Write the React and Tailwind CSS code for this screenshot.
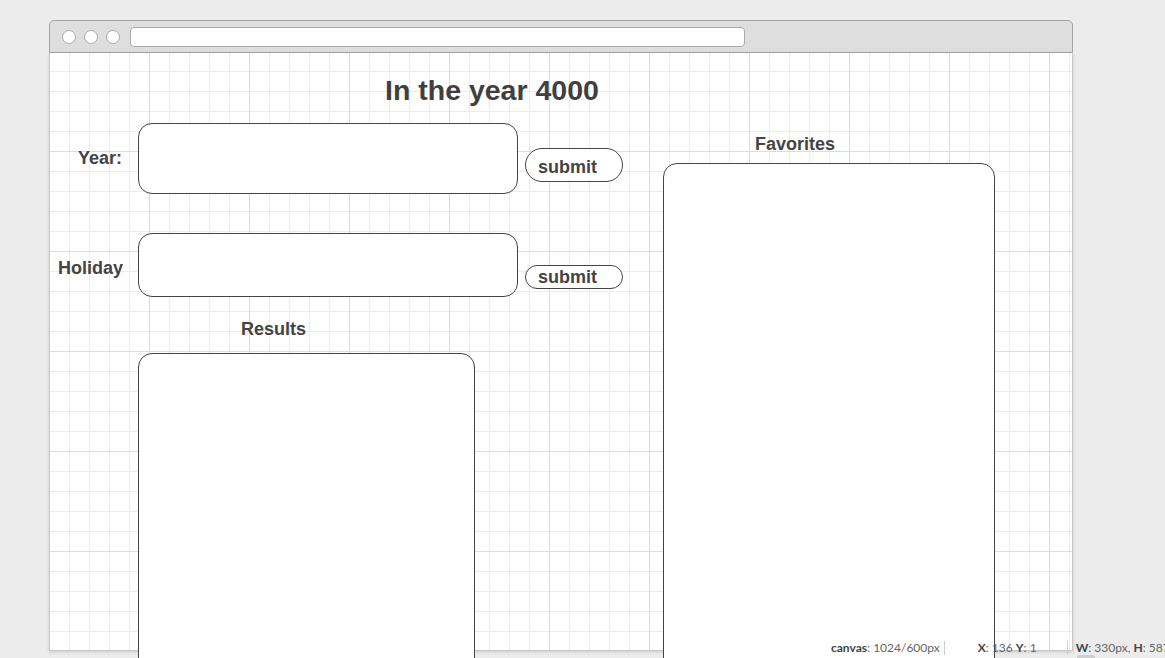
import React from 'react'

const font = { fontFamily: '"Liberation Sans", Arial, sans-serif' }

const Field = ({ className }) => (
  <div className={`border border-[#444] bg-white rounded-[14px] ${className}`}></div>
)

const SubmitButton = ({ className }) => (
  <div className={`w-[98px] border border-[#444] bg-white rounded-[17px] pl-[12px] flex items-center text-[18px] font-bold text-[#444] leading-none ${className}`}>
    submit
  </div>
)

export default function App() {
  return (
    <div className="relative h-[658px] w-[1165px] overflow-hidden bg-[#ececec]" style={font}>
      {/* mock browser window */}
      <div className="ml-[49px] pt-[20px] w-[1024px]">
        <div className="h-[33px] bg-[#dedede] border border-[#a3a3a3] rounded-t-[5px] flex items-center pl-[12px] gap-[8px]">
          <span className="w-[14px] h-[14px] rounded-full bg-white border border-[#aaa]"></span>
          <span className="w-[14px] h-[14px] rounded-full bg-white border border-[#aaa]"></span>
          <span className="w-[14px] h-[14px] rounded-full bg-white border border-[#aaa]"></span>
          <div className="ml-[2px] w-[615px] h-[20px] bg-white border border-[#aaa] rounded-[4px]"></div>
        </div>

        {/* canvas */}
        <div className="h-[598px] border-x border-b border-[#c8c8c8] shadow-[0_1px_3px_rgba(0,0,0,0.15)] bg-white bg-[linear-gradient(to_right,#dcdcdc_1px,transparent_1px),linear-gradient(to_bottom,#dcdcdc_1px,transparent_1px),linear-gradient(to_right,#ececec_1px,transparent_1px),linear-gradient(to_bottom,#ececec_1px,transparent_1px)] bg-[size:100px_100px,100px_100px,20px_20px,20px_20px] bg-[position:-1px_-2px]">
          <h1 className="pt-[21px] pl-[335px] text-[28.5px] leading-[32px] font-bold text-[#3f3f3f]">In the year 4000</h1>

          <div className="flex mt-[17px]">
            {/* left column */}
            <div className="w-[575px] flex flex-col">
              <div className="flex items-start">
                <div className="w-[88px] pl-[28px] mt-[25px] text-[18px] leading-[20px] font-bold text-[#444]">Year:</div>
                <Field className="w-[380px] h-[71px]" />
                <SubmitButton className="ml-[7px] mt-[25px] h-[34px] pt-[4px]" />
              </div>

              <div className="flex items-start mt-[39px]">
                <div className="w-[88px] pl-[8px] mt-[25px] text-[18px] leading-[20px] font-bold text-[#444]">Holiday</div>
                <Field className="w-[380px] h-[64px]" />
                <SubmitButton className="ml-[7px] mt-[32px] h-[24px]" />
              </div>

              <div className="mt-[22px] pl-[191px] text-[18px] leading-[20px] font-bold text-[#444]">Results</div>
              <Field className="mt-[14px] ml-[88px] w-[337px] h-[420px]" />
            </div>

            {/* right column */}
            <div className="ml-[38px] flex flex-col">
              <div className="mt-[11px] pl-[92px] text-[18px] leading-[20px] font-bold text-[#444]">Favorites</div>
              <Field className="mt-[9px] w-[332px] h-[520px]" />
            </div>
          </div>
        </div>
      </div>

      {/* status bar overlay */}
      <div className="absolute left-[831px] top-[640px] flex items-center h-[15px] text-[12px] text-[#666] whitespace-nowrap" style={{ fontFamily: 'Lato, "Liberation Sans", sans-serif' }}>
        <span><b className="text-[#444]">canvas</b>: 1024/600px</span>
        <span className="ml-[4px] w-px h-[14px] bg-[#ccc]"></span>
        <span className="ml-[33px]"><b className="text-[#444]">X</b>: 136 <b className="text-[#444]">Y</b>: 1</span>
        <span className="ml-[30px] w-px h-[14px] bg-[#ccc]"></span>
        <span className="ml-[8px]"><b className="text-[#444]">W</b>: 330px, <b className="text-[#444]">H</b>: 587px</span>
      </div>
      <div className="absolute left-[1077px] top-[655px] w-[18px] h-[6px] rounded-[2px] bg-[#cfcfcf]"></div>
    </div>
  )
}
